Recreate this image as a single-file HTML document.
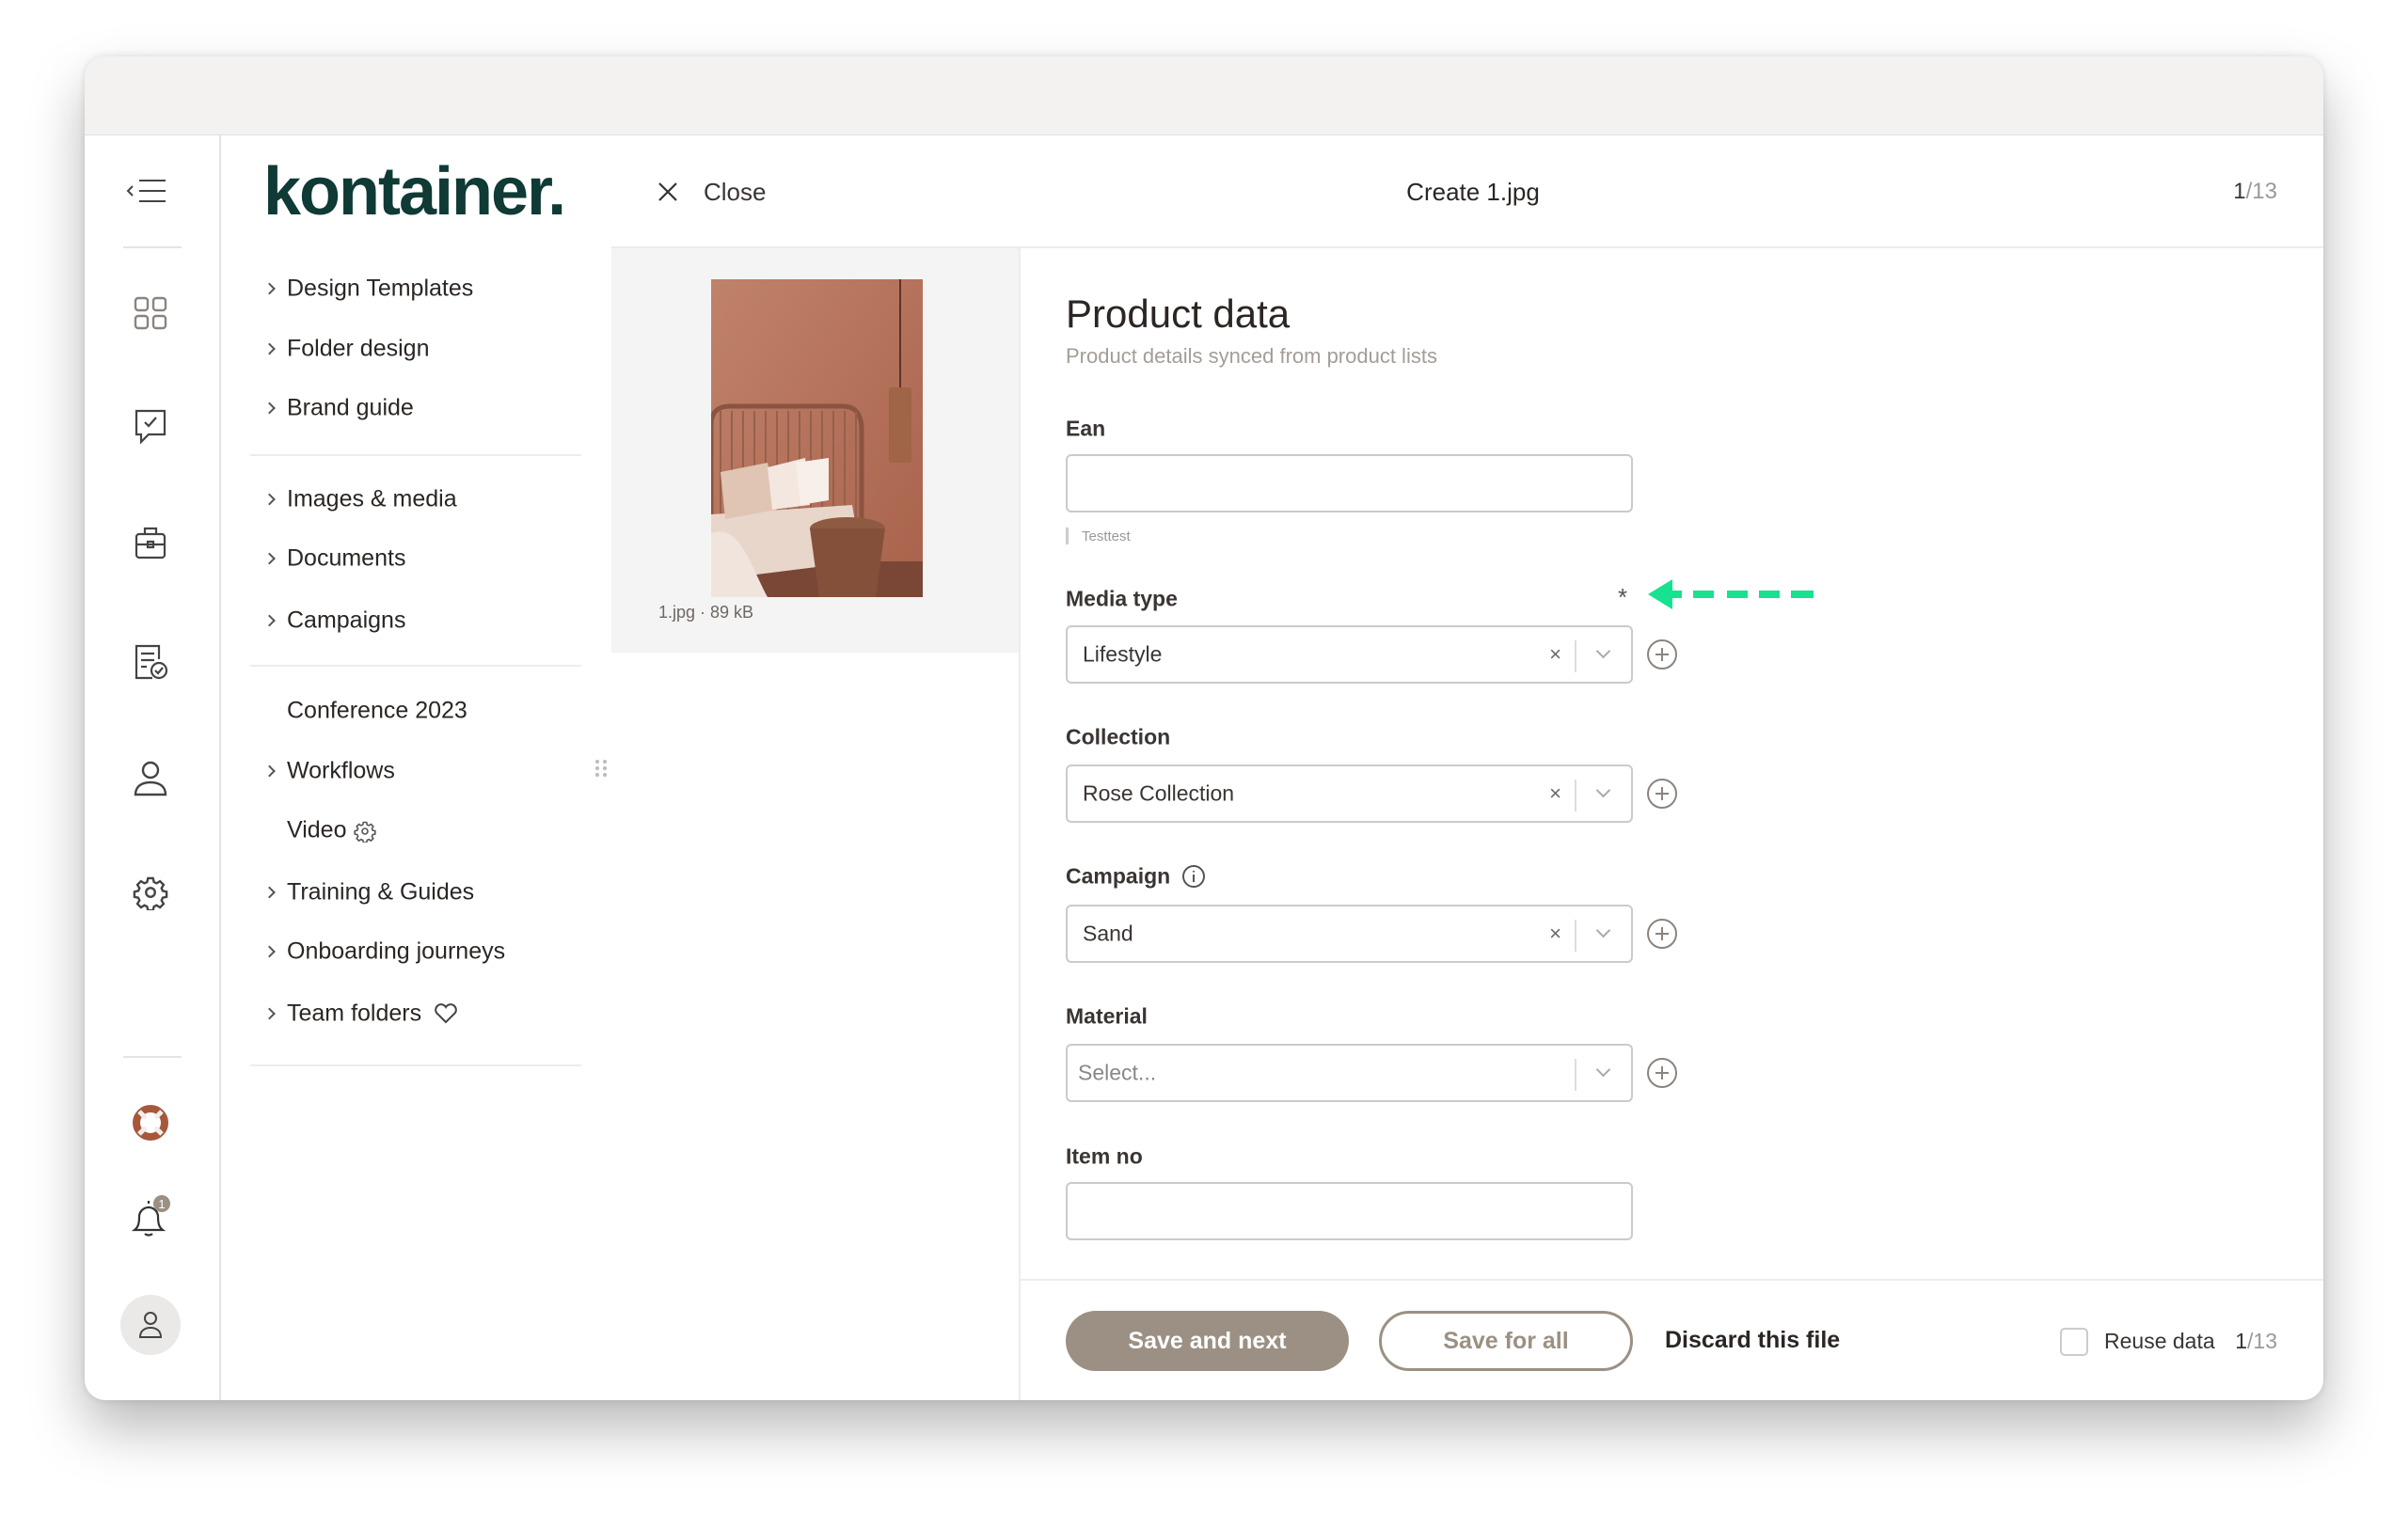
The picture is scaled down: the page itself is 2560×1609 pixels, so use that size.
<!DOCTYPE html>
<html><head><meta charset="utf-8"><style>
*{box-sizing:border-box;margin:0;padding:0}
body{width:2560px;height:1609px;background:#fff;font-family:"Liberation Sans",sans-serif;color:#2b2623;position:relative;overflow:hidden}
.win{position:absolute;left:90px;top:60px;width:2380px;height:1429px;border-radius:22px;background:#fff;box-shadow:0 30px 60px rgba(0,0,0,.28),0 0 8px rgba(0,0,0,.12);overflow:hidden}
.topbar{position:absolute;left:0;top:0;width:100%;height:84px;background:#f3f2f1;border-bottom:1px solid #e2e0de}
.a{position:absolute}
.nav{position:absolute;left:305px;font-size:25px;color:#2b2623;transform:translateY(-50%);white-space:nowrap}
.chev{position:absolute;left:282px;width:9px;height:9px;border-right:2px solid #555;border-top:2px solid #555;transform:translateY(-50%) rotate(45deg)}
.div{position:absolute;height:2px;background:#eeeceb}
.lbl{position:absolute;left:1133px;font-size:23px;font-weight:bold;color:#3a3532;transform:translateY(-50%)}
.inp{position:absolute;left:1133px;width:603px;height:62px;border:2px solid #cdcac7;border-radius:6px;background:#fff}
.inp .t{position:absolute;left:16px;top:50%;transform:translateY(-50%);font-size:23px;color:#3a3532}
.inp .x{position:absolute;right:74px;top:50%;transform:translateY(-50%);font-size:22px;color:#666}
.inp .sep{position:absolute;right:58px;top:14px;width:2px;height:34px;background:#ddd}
.inp .dd{position:absolute;right:24px;top:20px;width:11px;height:11px;border-right:2px solid #aaa;border-bottom:2px solid #aaa;transform:rotate(45deg)}
.plus{position:absolute;left:1751px;width:32px;height:32px;border:2px solid #8a8480;border-radius:50%;transform:translateY(-50%)}
.plus:before,.plus:after{content:"";position:absolute;background:#8a8480;left:50%;top:50%;transform:translate(-50%,-50%)}
.plus:before{width:14px;height:2px}.plus:after{width:2px;height:14px}
</style></head><body>
<div class="win"><div class="topbar"></div></div>
<!-- rail -->
<div class="a" style="left:233px;top:144px;width:2px;height:1345px;background:#e6e4e2"></div>
<div class="a" style="left:131px;top:262px;width:62px;height:2px;background:#e6e4e2"></div>
<div class="a" style="left:131px;top:1123px;width:62px;height:2px;background:#e6e4e2"></div>
<svg class="a" style="left:134px;top:188px" width="44" height="30" viewBox="0 0 44 30" fill="none" stroke="#444" stroke-width="2"><path d="M7 10l-5 5 5 5M14 4h28M14 15h28M14 26h28"/></svg>
<svg class="a" style="left:142px;top:315px" width="36" height="36" viewBox="0 0 36 36" fill="none" stroke="#8a8480" stroke-width="2.4"><rect x="2" y="2" width="13" height="13" rx="3"/><rect x="21" y="2" width="13" height="13" rx="3"/><rect x="2" y="21" width="13" height="13" rx="3"/><rect x="21" y="21" width="13" height="13" rx="3"/></svg>
<svg class="a" style="left:142px;top:434px" width="36" height="40" viewBox="0 0 36 40" fill="none" stroke="#444" stroke-width="2.2"><path d="M3 3h30v25H16l-8 8v-8H3z"/><path d="M12 15l4 4 8-9"/></svg>
<svg class="a" style="left:142px;top:559px" width="36" height="38" viewBox="0 0 36 38" fill="none" stroke="#444" stroke-width="2.2"><rect x="3" y="9" width="30" height="25" rx="3"/><path d="M12 9V3h12v6M3 20h30M15 17h6v6h-6z"/></svg>
<svg class="a" style="left:142px;top:684px" width="38" height="40" viewBox="0 0 38 40" fill="none" stroke="#444" stroke-width="2.2"><path d="M20 37H3V3h24v14M8 11h14M8 18h14M8 25h6"/><circle cx="27" cy="29" r="8"/><path d="M23 29l3 3 5-6"/></svg>
<svg class="a" style="left:141px;top:808px" width="38" height="40" viewBox="0 0 38 40" fill="none" stroke="#444" stroke-width="2.4"><circle cx="19" cy="11" r="8"/><path d="M3 37c0-9 7-13 16-13s16 4 16 13z"/></svg>
<svg class="a" style="left:141px;top:930px" width="38" height="38" viewBox="0 0 24 24" fill="none" stroke="#444" stroke-width="1.5"><circle cx="12" cy="12" r="3"/><path d="M10.3 2.5h3.4l.6 2.6 1.8.8 2.3-1.4 2.4 2.4-1.4 2.3.8 1.8 2.6.6v3.4l-2.6.6-.8 1.8 1.4 2.3-2.4 2.4-2.3-1.4-1.8.8-.6 2.6h-3.4l-.6-2.6-1.8-.8-2.3 1.4-2.4-2.4 1.4-2.3-.8-1.8-2.6-.6v-3.4l2.6-.6.8-1.8-1.4-2.3 2.4-2.4 2.3 1.4 1.8-.8z"/></svg>
<svg class="a" style="left:140px;top:1174px" width="40" height="40" viewBox="0 0 40 40"><circle cx="20" cy="20" r="15" fill="none" stroke="#a6583a" stroke-width="8"/><g stroke="#f0eeec" stroke-width="5"><path d="M8 8l7 7M32 8l-7 7M8 32l7-7M32 32l-7-7"/></g></svg>
<svg class="a" style="left:138px;top:1270px" width="46" height="46" viewBox="0 0 46 46" fill="none" stroke="#333" stroke-width="2.2"><path d="M5 38h30c-4-3-5-7-5-14a10 10 0 0 0-20 0c0 7-1 11-5 14zM16 42c2 2 6 2 8 0M20 10V7"/><circle cx="34" cy="10" r="9" fill="#9b9083" stroke="none"/><text x="34" y="15" font-size="13" fill="#fff" stroke="none" text-anchor="middle" font-family="Liberation Sans">1</text></svg>
<div class="a" style="left:128px;top:1377px;width:64px;height:64px;border-radius:50%;background:#ebe9e7"></div>
<svg class="a" style="left:147px;top:1394px" width="26" height="30" viewBox="0 0 26 30" fill="none" stroke="#444" stroke-width="2"><circle cx="13" cy="8" r="6"/><path d="M2 28c0-7 5-10 11-10s11 3 11 10z"/></svg>
<!-- logo -->
<div class="a" style="left:280px;top:168px;font-size:72px;font-weight:bold;color:#0f3a35;letter-spacing:-2px;line-height:1">kontainer.</div>
<!-- nav -->
<div class="chev" style="top:307px"></div><div class="nav" style="top:307px">Design Templates</div>
<div class="chev" style="top:371px"></div><div class="nav" style="top:371px">Folder design</div>
<div class="chev" style="top:434px"></div><div class="nav" style="top:434px">Brand guide</div>
<div class="div" style="left:266px;top:483px;width:352px"></div>
<div class="chev" style="top:531px"></div><div class="nav" style="top:531px">Images &amp; media</div>
<div class="chev" style="top:594px"></div><div class="nav" style="top:594px">Documents</div>
<div class="chev" style="top:660px"></div><div class="nav" style="top:660px">Campaigns</div>
<div class="div" style="left:266px;top:707px;width:352px"></div>
<div class="nav" style="top:756px">Conference 2023</div>
<div class="chev" style="top:820px"></div><div class="nav" style="top:820px">Workflows</div>
<svg class="a" style="left:633px;top:808px" width="12" height="18" viewBox="0 0 12 18" fill="#bbb"><circle cx="2" cy="2" r="2"/><circle cx="10" cy="2" r="2"/><circle cx="2" cy="9" r="2"/><circle cx="10" cy="9" r="2"/><circle cx="2" cy="16" r="2"/><circle cx="10" cy="16" r="2"/></svg>
<div class="nav" style="top:883px">Video</div>
<svg class="a" style="left:376px;top:872px" width="24" height="24" viewBox="0 0 24 24" fill="none" stroke="#555" stroke-width="1.6"><circle cx="12" cy="12" r="3"/><path d="M10.3 2.5h3.4l.6 2.6 1.8.8 2.3-1.4 2.4 2.4-1.4 2.3.8 1.8 2.6.6v3.4l-2.6.6-.8 1.8 1.4 2.3-2.4 2.4-2.3-1.4-1.8.8-.6 2.6h-3.4l-.6-2.6-1.8-.8-2.3 1.4-2.4-2.4 1.4-2.3-.8-1.8-2.6-.6v-3.4l2.6-.6.8-1.8-1.4-2.3 2.4-2.4 2.3 1.4 1.8-.8z"/></svg>
<div class="chev" style="top:949px"></div><div class="nav" style="top:949px">Training &amp; Guides</div>
<div class="chev" style="top:1012px"></div><div class="nav" style="top:1012px">Onboarding journeys</div>
<div class="chev" style="top:1078px"></div><div class="nav" style="top:1078px">Team folders</div>
<svg class="a" style="left:461px;top:1067px" width="26" height="22" viewBox="0 0 26 22" fill="none" stroke="#444" stroke-width="2"><path d="M13 20L3 10a5.5 5.5 0 0 1 10-6 5.5 5.5 0 0 1 10 6z"/></svg>
<div class="div" style="left:266px;top:1132px;width:352px"></div>
<!-- header -->
<svg class="a" style="left:699px;top:193px" width="22" height="22" viewBox="0 0 22 22" stroke="#333" stroke-width="2.2"><path d="M2 2l18 18M20 2L2 20"/></svg>
<div class="a" style="left:748px;top:189px;font-size:26px;color:#3a3532">Close</div>
<div class="a" style="left:1366px;top:189px;width:400px;text-align:center;font-size:26px;color:#2b2623">Create 1.jpg</div>
<div class="a" style="left:2321px;top:190px;width:100px;text-align:right;font-size:24px;color:#3a3532">1<span style="color:#999">/13</span></div>
<div class="a" style="left:650px;top:262px;width:1820px;height:2px;background:#eeeceb"></div>
<!-- preview -->
<div class="a" style="left:650px;top:264px;width:433px;height:430px;background:#f4f4f4"></div>
<svg class="a" style="left:756px;top:297px" width="225" height="338" viewBox="0 0 225 338">
<defs><linearGradient id="w" x1="0" y1="0" x2="1" y2="1"><stop offset="0" stop-color="#c0826b"/><stop offset="1" stop-color="#a9624b"/></linearGradient></defs>
<rect width="225" height="338" fill="url(#w)"/>
<rect x="0" y="300" width="225" height="38" fill="#7a4736"/>
<path d="M0 155 Q0 135 20 135 L140 135 Q160 135 160 160 L160 300 L0 300z" fill="none" stroke="#8a5440" stroke-width="5"/>
<g stroke="#96604b" stroke-width="2"><path d="M10 140v160M22 140v160M34 140v160M46 140v160M58 140v160M70 140v160M82 140v160M94 140v160M106 140v160M118 140v160M130 140v160M142 140v160M154 140v160"/></g>
<path d="M0 250 L150 240 L160 300 L0 320z" fill="#e8d6cb"/>
<path d="M0 270 C30 260 40 300 60 338 L0 338z" fill="#f1e4dc"/>
<path d="M10 205 L60 195 L70 245 L15 255z" fill="#e0c4b4"/><path d="M60 200 L100 190 L105 240 L65 245z" fill="#f3e7e0"/><path d="M90 195 L125 190 L125 235 L95 240z" fill="#f7efe9"/>
<rect x="200" y="0" width="2" height="120" fill="#5a3426"/><rect x="189" y="115" width="24" height="80" rx="3" fill="#a06447"/>
<ellipse cx="145" cy="265" rx="40" ry="12" fill="#8f5a42"/><path d="M105 265 L115 338 L175 338 L185 265z" fill="#85503a"/>
</svg>
<div class="a" style="left:700px;top:641px;font-size:18px;color:#6d6763">1.jpg · 89 kB</div>
<!-- form panel -->
<div class="a" style="left:1083px;top:264px;width:2px;height:1225px;background:#eeeceb"></div>
<div class="a" style="left:1133px;top:310px;font-size:42px;color:#2b2623">Product data</div>
<div class="a" style="left:1133px;top:366px;font-size:22px;color:#a39d98">Product details synced from product lists</div>
<div class="lbl" style="top:456px">Ean</div>
<div class="inp" style="top:483px"></div>
<div class="a" style="left:1133px;top:561px;width:3px;height:18px;background:#ccc"></div>
<div class="a" style="left:1150px;top:562px;font-size:15px;color:#999">Testtest</div>
<div class="lbl" style="top:637px">Media type</div>
<div class="a" style="left:1720px;top:620px;font-size:26px;color:#555">*</div>
<svg class="a" style="left:1752px;top:612px" width="180" height="40" viewBox="0 0 180 40"><path d="M0 20 L26 4 L26 36z" fill="#17e28f"/><g stroke="#17e28f" stroke-width="8"><path d="M24 20h12M48 20h22M84 20h22M118 20h22M152 20h24"/></g></svg>
<div class="inp" style="top:665px"><span class="t">Lifestyle</span><span class="x">×</span><span class="sep"></span><span class="dd"></span></div>
<div class="plus" style="top:696px"></div>
<div class="lbl" style="top:784px">Collection</div>
<div class="inp" style="top:813px"><span class="t">Rose Collection</span><span class="x">×</span><span class="sep"></span><span class="dd"></span></div>
<div class="plus" style="top:844px"></div>
<div class="lbl" style="top:932px">Campaign</div>
<svg class="a" style="left:1256px;top:919px" width="26" height="26" viewBox="0 0 26 26" fill="none" stroke="#555" stroke-width="2"><circle cx="13" cy="13" r="11"/><path d="M13 11v8M13 7v1.5"/></svg>
<div class="inp" style="top:962px"><span class="t">Sand</span><span class="x">×</span><span class="sep"></span><span class="dd"></span></div>
<div class="plus" style="top:993px"></div>
<div class="lbl" style="top:1081px">Material</div>
<div class="inp" style="top:1110px"><span class="t" style="left:11px;color:#888">Select...</span><span class="sep"></span><span class="dd"></span></div>
<div class="plus" style="top:1141px"></div>
<div class="lbl" style="top:1230px">Item no</div>
<div class="inp" style="top:1257px"></div>
<!-- footer -->
<div class="a" style="left:1084px;top:1360px;width:1386px;height:2px;background:#eeeceb"></div>
<div class="a" style="left:1133px;top:1394px;width:301px;height:64px;border-radius:32px;background:#9b9083;color:#fff;font-size:25px;font-weight:bold;text-align:center;line-height:64px">Save and next</div>
<div class="a" style="left:1466px;top:1394px;width:270px;height:64px;border-radius:32px;border:3px solid #9b9083;color:#9b9083;font-size:25px;font-weight:bold;text-align:center;line-height:58px">Save for all</div>
<div class="a" style="left:1770px;top:1411px;font-size:25px;font-weight:bold;color:#2b2623">Discard this file</div>
<div class="a" style="left:2190px;top:1412px;width:30px;height:30px;border:2px solid #ccc;border-radius:5px"></div>
<div class="a" style="left:2237px;top:1413px;font-size:23px;color:#3a3532">Reuse data</div>
<div class="a" style="left:2321px;top:1413px;width:100px;text-align:right;font-size:23px;color:#3a3532">1<span style="color:#999">/13</span></div>
</body></html>
